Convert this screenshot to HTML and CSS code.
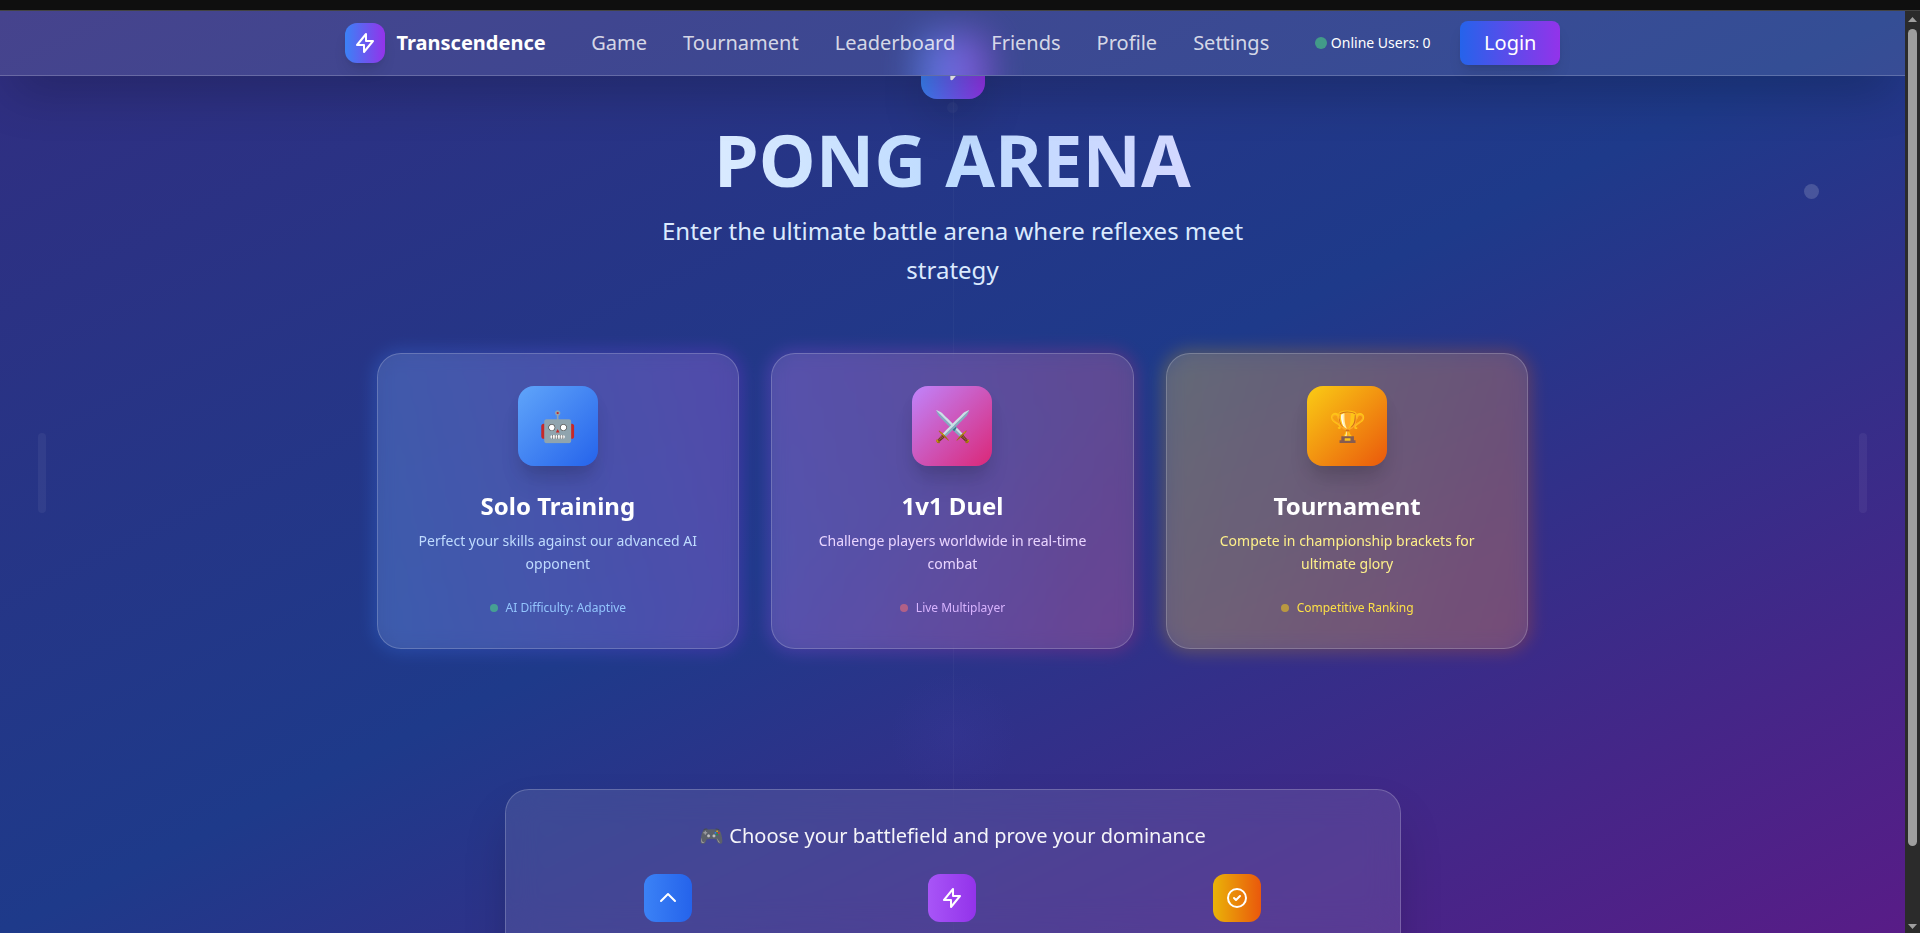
FILE: index.html
```html
<!DOCTYPE html>
<html lang="en">
<head>
<meta charset="utf-8">
<title>Transcendence</title>
<link rel="stylesheet" href="styles.css">
</head>
<body>
<div class="frame-top"></div>
<div class="viewport">
  <div class="page">
    <div class="decor paddle paddle-left"></div>
    <div class="decor paddle paddle-right"></div>
    <div class="decor net"></div>
    <div class="decor net-dot"></div>
    <div class="decor ball"></div>
    <div class="decor orb"></div>

    <main class="content">
      <div class="hero-icon">
        <svg width="32" height="32" viewBox="0 0 24 24" fill="none" stroke="#fff" stroke-width="2" stroke-linecap="round" stroke-linejoin="round"><path d="M13 10V3L4 14h7v7l9-11h-7z"/></svg>
      </div>
      <h1 class="title">PONG ARENA</h1>
      <p class="subtitle">Enter the ultimate battle arena where reflexes meet strategy</p>

      <div class="modes">
        <div class="mode mode-solo">
          <div class="glow"></div>
          <div class="card">
            <div class="card-icon">🤖</div>
            <h3 class="card-title">Solo Training</h3>
            <p class="card-text">Perfect your skills against our advanced AI opponent</p>
            <div class="status"><span class="dot"></span><span>AI Difficulty: Adaptive</span></div>
          </div>
        </div>
        <div class="mode mode-duel">
          <div class="glow"></div>
          <div class="card">
            <div class="card-icon">⚔️</div>
            <h3 class="card-title">1v1 Duel</h3>
            <p class="card-text">Challenge players worldwide in real-time combat</p>
            <div class="status"><span class="dot"></span><span>Live Multiplayer</span></div>
          </div>
        </div>
        <div class="mode mode-tour">
          <div class="glow"></div>
          <div class="card">
            <div class="card-icon">🏆</div>
            <h3 class="card-title">Tournament</h3>
            <p class="card-text">Compete in championship brackets for ultimate glory</p>
            <div class="status"><span class="dot"></span><span>Competitive Ranking</span></div>
          </div>
        </div>
      </div>

      <section class="panel">
        <p class="panel-title">🎮 Choose your battlefield and prove your dominance</p>
        <div class="features">
          <div class="feature feature-blue">
            <svg width="24" height="24" viewBox="0 0 24 24" fill="none" stroke="#fff" stroke-width="2" stroke-linecap="round" stroke-linejoin="round"><path d="M5 15l7-7 7 7"/></svg>
          </div>
          <div class="feature feature-purple">
            <svg width="24" height="24" viewBox="0 0 24 24" fill="none" stroke="#fff" stroke-width="2" stroke-linecap="round" stroke-linejoin="round"><path d="M13 10V3L4 14h7v7l9-11h-7z"/></svg>
          </div>
          <div class="feature feature-orange">
            <svg width="24" height="24" viewBox="0 0 24 24" fill="none" stroke="#fff" stroke-width="2" stroke-linecap="round" stroke-linejoin="round"><path d="M9 12l2 2 4-4m6 2a9 9 0 11-18 0 9 9 0 0118 0z"/></svg>
          </div>
        </div>
      </section>
    </main>

    <nav class="nav">
      <div class="nav-haze"><div class="nav-haze-spot"></div></div>
      <div class="nav-inner">
        <div class="brand">
          <div class="brand-icon">
            <svg width="24" height="24" viewBox="0 0 24 24" fill="none" stroke="#fff" stroke-width="2" stroke-linecap="round" stroke-linejoin="round"><path d="M13 10V3L4 14h7v7l9-11h-7z"/></svg>
          </div>
          <span class="brand-name">Transcendence</span>
        </div>
        <div class="links">
          <a>Game</a><a>Tournament</a><a>Leaderboard</a><a>Friends</a><a>Profile</a><a>Settings</a>
        </div>
        <div class="account">
          <div class="online"><span class="online-dot"></span><span>Online Users: 0</span></div>
          <button class="login">Login</button>
        </div>
      </div>
    </nav>
  </div>
  <div class="scrollbar">
    <svg width="9" height="5" viewBox="0 0 9 5"><path d="M0 5L4.5 0L9 5z" fill="#9f9f9f"/></svg>
    <div class="thumb"></div>
    <svg width="9" height="5" viewBox="0 0 9 5"><path d="M0 0L4.5 5L9 0z" fill="#9f9f9f"/></svg>
  </div>
</div>
</body>
</html>
```
FILE: styles.css
```css
* { box-sizing: border-box; margin: 0; padding: 0; }

body {
  width: 1920px;
  height: 933px;
  overflow: hidden;
  display: flex;
  flex-direction: column;
  font-family: "Noto Sans", "Open Sans", sans-serif;
  color: #fff;
  background: #0f0f0f;
}

.frame-top { flex: none; height: 11px; background: #0f0f0f; border-bottom: 1px solid #434343; }
.viewport { flex: 1; min-height: 0; display: flex; }

.page {
  position: relative;
  width: 1905px;
  overflow: hidden;
  background: linear-gradient(to bottom right, #312e81, #1e3a8a 50%, #581c87);
}

/* scrollbar */
.scrollbar {
  flex: 1;
  display: flex;
  flex-direction: column;
  align-items: center;
  padding: 6px 0 4px;
  background: #2b2b2b;
}
.thumb { width: 9px; height: 817px; margin: 7px 0 auto; border-radius: 5px; background: #9f9f9f; }

/* background decoration */
.decor { position: absolute; }
.paddle { top: 422px; width: 8px; height: 80px; border-radius: 4px; background: rgba(255, 255, 255, .05); }
.paddle-left { left: 2%; }
.paddle-right { right: 2%; }
.net { left: 50%; top: 65px; bottom: 0; width: 1px; background: rgba(255, 255, 255, .03); }
.net-dot { left: 947px; top: 91px; width: 11px; height: 11px; border-radius: 50%; background: rgba(255, 255, 255, .035); }
.ball { left: 1803.5px; top: 173px; width: 15px; height: 15px; border-radius: 50%; background: rgba(255, 255, 255, .16); }
.orb {
  left: 889px; top: 660px; width: 128px; height: 128px; border-radius: 50%;
  background: radial-gradient(circle, rgba(80, 70, 190, .1), transparent 70%);
}

/* hero */
.content { position: relative; display: flex; flex-direction: column; align-items: center; padding-top: 24px; }
.hero-icon {
  display: grid;
  place-items: center;
  width: 64px;
  height: 64px;
  border-radius: 16px;
  background: linear-gradient(to right, #3b82f6, #9333ea);
  box-shadow: 0 25px 50px -12px rgba(0, 0, 0, .25);
  clip-path: inset(41px -80px -100px -80px);
}
.title {
  margin-top: 24px;
  width: 672px;
  font-size: 72px;
  line-height: 72px;
  font-weight: 700;
  text-align: center;
  color: transparent;
  background: linear-gradient(to right, #e4f0ff, #bedbff 50%, #dcd6ff);
  -webkit-background-clip: text;
  background-clip: text;
}
.subtitle {
  margin-top: 16px;
  max-width: 672px;
  font-size: 24px;
  line-height: 39px;
  text-align: center;
  color: #dbeafe;
}

/* game modes */
.modes { display: grid; grid-template-columns: repeat(3, 1fr); gap: 32px; width: 1152px; margin-top: 64px; }
.mode { position: relative; }
.glow { position: absolute; inset: -4px; border-radius: 28px; opacity: .25; filter: blur(8px); }
.card {
  position: relative;
  display: flex;
  flex-direction: column;
  align-items: center;
  padding: 32px;
  border: 1px solid rgba(255, 255, 255, .2);
  border-radius: 24px;
  background: rgba(255, 255, 255, .1);
  backdrop-filter: blur(8px);
  text-align: center;
}
.card-icon {
  display: grid;
  place-items: center;
  width: 80px;
  height: 80px;
  border-radius: 16px;
  font-size: 30px;
  line-height: 36px;
  box-shadow: 0 10px 15px -3px rgba(0, 0, 0, .1), 0 20px 25px -5px rgba(0, 0, 0, .1);
}
.card-title { margin-top: 24px; font-size: 24px; line-height: 32px; font-weight: 700; }
.card-text { margin-top: 8px; font-size: 14px; line-height: 22.75px; }
.status { display: flex; align-items: center; gap: 8px; margin-top: 24px; font-size: 12px; line-height: 16px; }
.dot { width: 8px; height: 8px; border-radius: 50%; opacity: .55; }

.mode-solo .glow { background: linear-gradient(to right, #3b82f6, #9333ea); }
.mode-solo .card-icon { background: linear-gradient(to bottom right, #60a5fa, #2563eb); }
.mode-solo .card-text { color: #bfdbfe; }
.mode-solo .status { color: #93c5fd; }
.mode-solo .dot { background: #4ade80; }

.mode-duel .glow { background: linear-gradient(to right, #a855f7, #db2777); }
.mode-duel .card-icon { background: linear-gradient(to bottom right, #c084fc, #db2777); }
.mode-duel .card-text { color: #e9d5ff; }
.mode-duel .status { color: #d8b4fe; }
.mode-duel .dot { background: #f87171; }

.mode-tour .glow { background: linear-gradient(to right, #eab308, #ea580c); }
.mode-tour .card-icon { background: linear-gradient(to bottom right, #facc15, #ea580c); }
.mode-tour .card-text { color: #fef08a; }
.mode-tour .status { color: #fde047; }
.mode-tour .dot { background: #facc15; }

/* info panel */
.panel {
  width: 896px;
  height: 240px;
  margin-top: 140px;
  padding: 32px;
  border: 1px solid rgba(255, 255, 255, .2);
  border-radius: 24px;
  background: rgba(255, 255, 255, .1);
  backdrop-filter: blur(16px);
  box-shadow: 0 25px 50px -12px rgba(0, 0, 0, .25);
}
.panel-title { font-size: 20px; line-height: 28px; text-align: center; color: rgba(255, 255, 255, .95); }
.features { display: grid; grid-template-columns: repeat(3, 1fr); gap: 24px; justify-items: center; margin-top: 24px; }
.feature { display: grid; place-items: center; width: 48px; height: 48px; border-radius: 12px; }
.feature-blue { background: linear-gradient(to right, #3b82f6, #2563eb); }
.feature-purple { background: linear-gradient(to right, #a855f7, #9333ea); }
.feature-orange { background: linear-gradient(to right, #eab308, #ea580c); }

/* navigation, floating over the page */
.nav {
  position: absolute;
  top: 0;
  left: 0;
  right: 0;
  height: 65px;
  border-bottom: 1px solid rgba(255, 255, 255, .2);
  background: rgba(255, 255, 255, .1);
  box-shadow: 0 25px 50px -12px rgba(0, 0, 0, .25);
}
/* frosted glow of the hero icon behind the bar */
.nav-haze { position: absolute; inset: 0; overflow: hidden; }
.nav-haze-spot {
  width: 68px;
  height: 84px;
  margin: 23px auto 0;
  border-radius: 16px;
  background: linear-gradient(to right, #5590f5, #a050e8);
  opacity: .76;
  filter: blur(18px);
}
.nav-inner {
  position: relative;
  display: flex;
  align-items: center;
  justify-content: space-between;
  width: 1216px;
  height: 64px;
  margin: 0 auto;
}
.brand { display: flex; align-items: center; gap: 12px; }
.brand-icon {
  display: grid;
  place-items: center;
  width: 40px;
  height: 40px;
  border-radius: 12px;
  background: linear-gradient(to right, #3b82f6, #9333ea);
  box-shadow: 0 10px 15px -3px rgba(0, 0, 0, .1), 0 4px 6px -4px rgba(0, 0, 0, .1);
}
.brand-name { font-size: 20px; line-height: 28px; font-weight: 700; }
.links { display: flex; gap: 36px; font-size: 20px; line-height: 28px; color: rgba(255, 255, 255, .8); }
.account { display: flex; align-items: center; gap: 29.5px; }
.online { display: flex; align-items: center; gap: 4px; font-size: 14px; line-height: 20px; }
.online-dot { width: 12px; height: 12px; border-radius: 50%; background: #4ade80; opacity: .55; }
.login {
  padding: 8px 24px;
  border: 0;
  border-radius: 8px;
  font: 400 20px/28px "Noto Sans", "Open Sans", sans-serif;
  color: #fff;
  background: linear-gradient(to right, #2563eb, #9333ea);
  box-shadow: 0 10px 15px -3px rgba(0, 0, 0, .1), 0 4px 6px -4px rgba(0, 0, 0, .1);
}
```
